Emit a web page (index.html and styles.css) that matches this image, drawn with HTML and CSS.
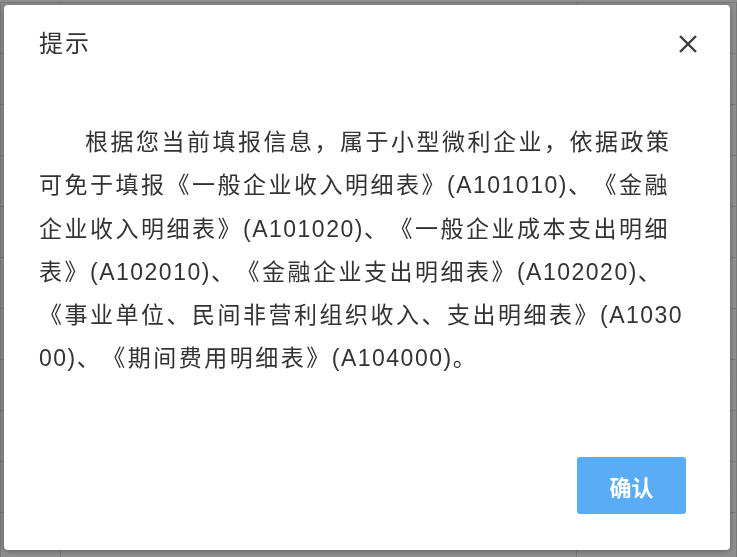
FILE: index.html
```html
<!DOCTYPE html>
<html lang="zh-CN">
<head>
    <meta charset="UTF-8">
    <meta name="viewport" content="width=device-width, initial-scale=1.0">
    <title>提示</title>
    <link rel="stylesheet" href="styles.css">
</head>
<body>

    <div class="page">
        <table class="grid">
            <tr><td>行次</td><td>项目</td><td>金额</td></tr>
            <tr><td>1</td><td>营业收入</td><td>0.00</td></tr>
            <tr><td>2</td><td>营业成本</td><td>0.00</td></tr>
            <tr><td>3</td><td>税金及附加</td><td>0.00</td></tr>
            <tr><td>4</td><td>销售费用</td><td>0.00</td></tr>
            <tr><td>5</td><td>管理费用</td><td>0.00</td></tr>
            <tr><td>6</td><td>财务费用</td><td>0.00</td></tr>
            <tr><td>7</td><td>资产减值损失</td><td>0.00</td></tr>
            <tr><td>8</td><td>投资收益</td><td>0.00</td></tr>
            <tr><td>9</td><td>营业利润</td><td>0.00</td></tr>
            <tr><td>10</td><td>营业外收入</td><td>0.00</td></tr>
        </table>
    </div>

    <div class="mask">
        <div class="dialog">
            <div class="dialog-header">
                <span class="dialog-title">提示</span>
                <button class="dialog-close" title="关闭">
                    <svg width="20" height="20" viewBox="0 0 20 20">
                        <path d="M2 2L18 18M18 2L2 18" stroke="#3a3a3a" stroke-width="2.4" fill="none"/>
                    </svg>
                </button>
            </div>

            <div class="dialog-body">
                <p>根据您当前填报信息，属于小型微利企业，依据政策可免于填报《一般企业收入明细表》<span class="code">(A101010)</span>、《金融企业收入明细表》<span class="code">(A101020)</span>、《一般企业成本支出明细表》<span class="code">(A102010)</span>、《金融企业支出明细表》<span class="code">(A102020)</span>、《事业单位、民间非营利组织收入、支出明细表》<span class="code">(A103000)</span>、《期间费用明细表》<span class="code">(A104000)</span>。</p>
            </div>

            <div class="dialog-footer">
                <button class="btn-ok">确认</button>
            </div>
        </div>
    </div>

</body>
</html>
```

FILE: styles.css
```css
* {
    margin: 0;
    padding: 0;
    box-sizing: border-box;
}

body {
    font-family: "Liberation Sans", "Noto Sans CJK SC", sans-serif;
    background-color: #ffffff;
    color: #333;
    width: 737px;
    height: 557px;
    overflow: hidden;
}

/* tabela do fundo, quase toda coberta pela máscara */
.page {
    padding-top: 2px;
}

.grid {
    width: 100%;
    border-collapse: collapse;
    font-size: 14px;
}

.grid td {
    height: 51px;
    border: 1px solid #d6d6d6;
    padding: 0 6px;
}

.grid td:first-child {
    width: 60px;
}

.grid td:last-child {
    width: 160px;
    text-align: right;
}

.mask {
    position: fixed;
    top: 0;
    left: 0;
    right: 0;
    bottom: 0;
    background-color: rgba(0, 0, 0, 0.44);
    padding: 5px 7px 7px 4px;
    display: flex;
}

.dialog {
    flex: 1;
    background-color: #ffffff;
    border-radius: 4px;
    box-shadow: 0 1px 6px rgba(0, 0, 0, 0.35);
    display: flex;
    flex-direction: column;
}

.dialog-header {
    display: flex;
    justify-content: space-between;
    align-items: center;
    padding: 24px 32px 0 35px;
}

.dialog-title {
    font-size: 24px;
    line-height: 30px;
    letter-spacing: 2px;
    color: #333;
}

.dialog-close {
    background: none;
    border: none;
    cursor: pointer;
    width: 20px;
    height: 20px;
    display: flex;
}

.dialog-body {
    padding: 0 40px 0 35px;
    margin-top: 62px;
}

.dialog-body p {
    font-size: 23px;
    line-height: 43.3px;
    letter-spacing: 2.5px;
    text-indent: 2em;
    word-break: break-all;
    text-spacing-trim: space-all;
    color: #333;
}

/* códigos das tabelas ficam mais juntos */
.dialog-body .code {
    letter-spacing: 1.5px;
}

.dialog-footer {
    margin-top: auto;
    display: flex;
    justify-content: flex-end;
    padding: 0 44px 36px 0;
}

.btn-ok {
    width: 109px;
    height: 57px;
    background-color: #5aadf4;
    color: #ffffff;
    border: none;
    border-radius: 3px;
    font-family: "Noto Sans CJK SC", sans-serif;
    font-size: 22px;
    font-weight: bold;
    cursor: pointer;
}
```
